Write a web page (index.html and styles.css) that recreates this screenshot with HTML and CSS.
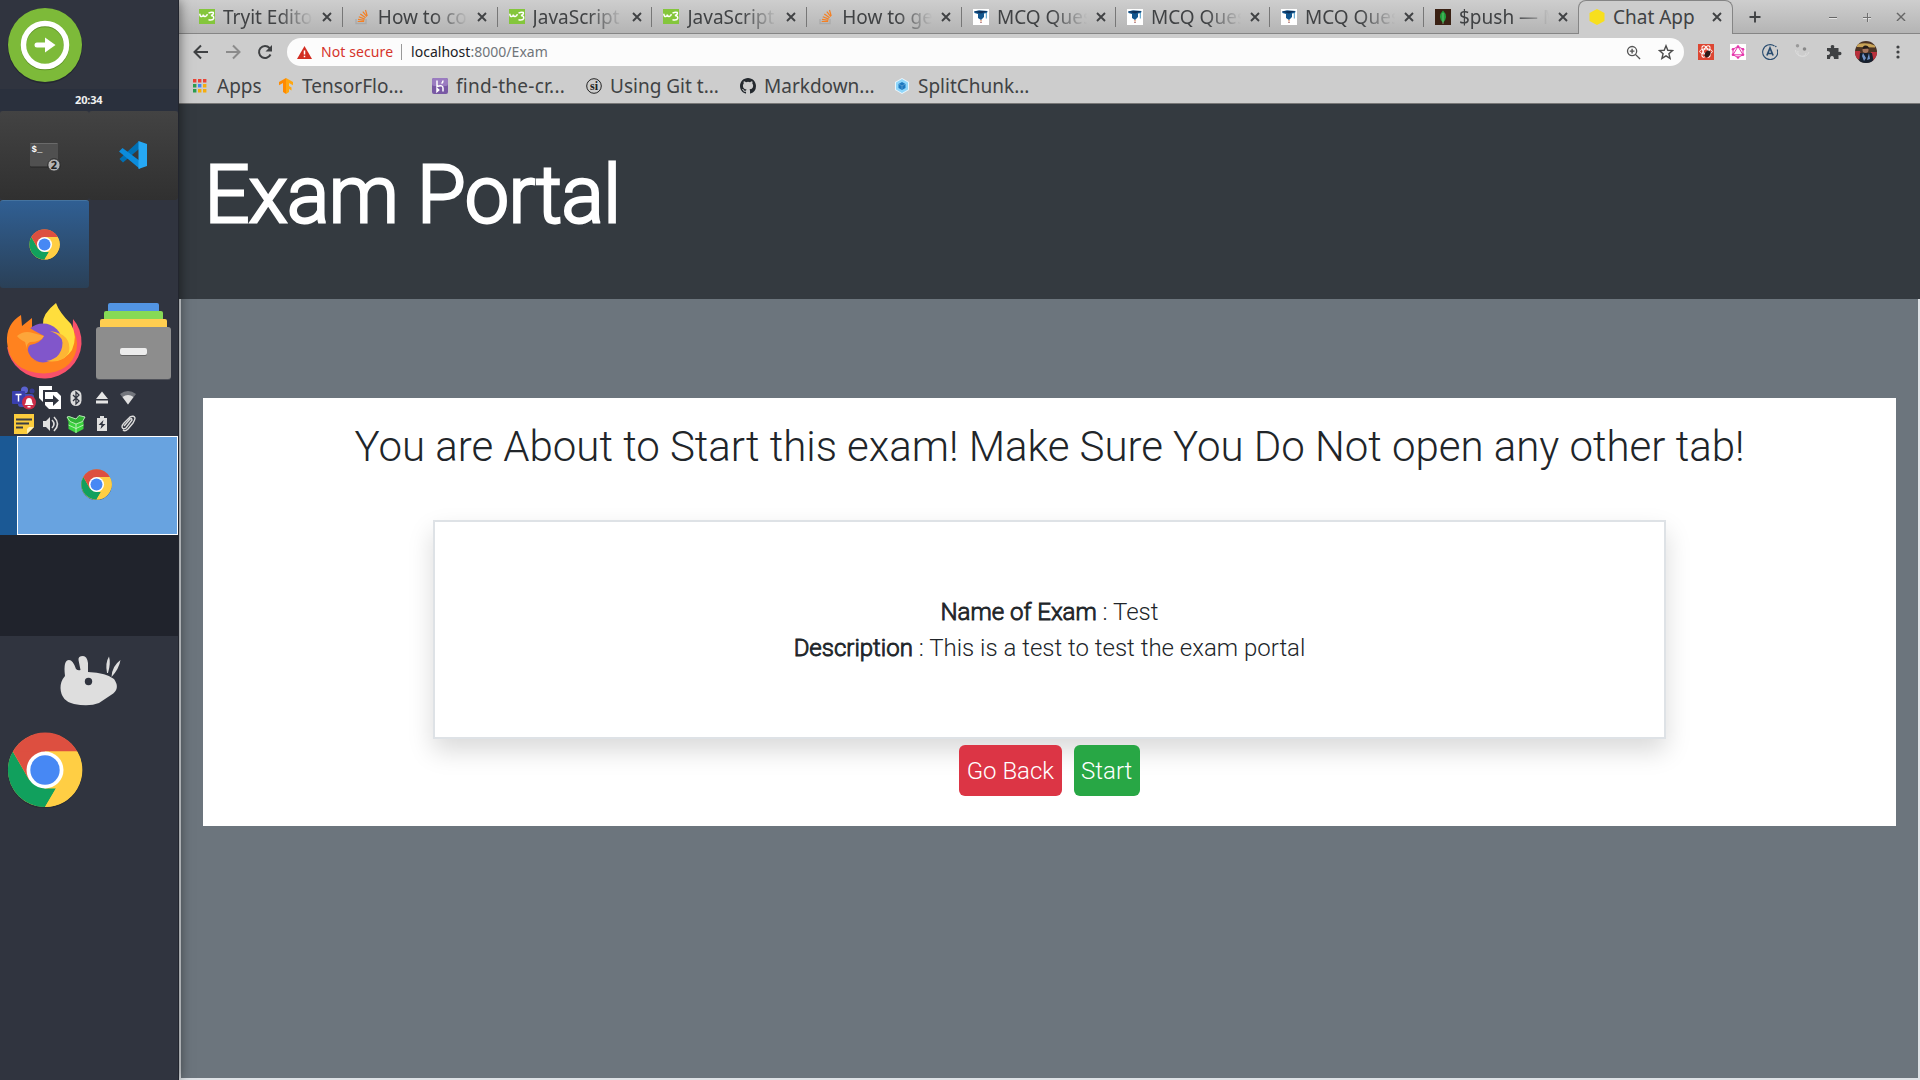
FILE: index.html
```html
<!DOCTYPE html>
<html lang="en">
<head>
<meta charset="utf-8">
<title>Chat App</title>
<link rel="stylesheet" href="styles.css">
</head>
<body>
<svg class="defs" aria-hidden="true">
  <symbol id="chrome" viewBox="0 0 76 76">
    <circle cx="38" cy="39" r="37.5" fill="#22252e" opacity=".5"/>
    <circle cx="38" cy="38" r="37" fill="#ffce44"/>
    <path d="M38 38 5.8 19.6A37 37 0 0 1 70.4 19.5H38z" fill="#dd4f40"/>
    <path d="M38 75A37 37 0 0 1 5.8 19.6L22 47.5 38 56.5H49z" fill="#11a05d"/>
    <path d="M5.8 19.6 22 47.5 38 38V19.5H20z" fill="#dd4f40"/>
    <path d="M38 19.5H70.4A37 37 0 0 1 38 75L54 47.5z" fill="#ffce44"/>
    <circle cx="38" cy="38" r="18.5" fill="#fff"/>
    <circle cx="38" cy="38" r="14.7" fill="#4788f4"/>
  </symbol>
  <symbol id="w3" viewBox="0 0 16 16">
    <rect width="16" height="15" fill="#84c63c"/>
    <path d="M.8 4.8q.2 3 2 2.8 1.500-.2 1.500-2 .3 2.200 2 2 1.700-.2 2-2.400M9.500 4.200q3-1.700 4.800-.7.700 2-2.300 3 3 .2 2.700 2.700-.6 2.400-5.200 1.500" fill="none" stroke="#fff" stroke-width="1.500"/>
  </symbol>
  <symbol id="so" viewBox="0 0 16 16">
    <path d="M2 10v4.500h10V10" fill="none" stroke="#aaa" stroke-width="1.300"/>
    <path d="M3.700 12.500h6.500M4 10.300l6.300 1M4.800 7.700l6 2.400M6.300 5l5.300 3.800M8.800 2.700l4 5M11.500 1l1.700 6" stroke="#f48024" stroke-width="1.200" fill="none"/>
  </symbol>
  <symbol id="mcq" viewBox="0 0 16 16">
    <rect width="16" height="16" fill="#fff"/>
    <path d="M1 2.500 6 1.300l8.500.8-.5 2-3 .5V8L8 11 5 9V5L1.500 4z" fill="#12568e"/>
    <path d="M1 2.500 8 2l6.500.1L8 4.500z" fill="#0c2e57"/>
    <path d="M13.300 3.500v6" stroke="#4c9ac8" stroke-width="1"/>
    <path d="m6.800 11 1.200 3 1.200-3z" fill="#e3b39b"/><circle cx="8" cy="13.500" r=".6" fill="#723"/>
  </symbol>
  <symbol id="close" viewBox="0 0 10 10"><path d="m1 1 8 8M9 1 1 9" stroke="#404244" stroke-width="1.900"/></symbol>
</svg>
<div class="desktop">
  <aside class="panel">
    <div class="launcher">
      <svg width="76" height="78" viewBox="0 0 76 78"><circle cx="38" cy="39" r="37.500" fill="#242831"/><circle cx="38" cy="38" r="37" fill="#7dba39"/><circle cx="38" cy="39" r="21.500" fill="none" stroke="#5d9224" stroke-width="5.500"/><circle cx="38" cy="38" r="21.500" fill="none" stroke="#fff" stroke-width="5.500"/><path d="M30 38h9" stroke="#fff" stroke-width="5" stroke-linecap="round"/><path d="M38 30.500 48.500 38 38 45.500z" fill="#fff"/></svg>
    </div>
    <div class="clock">20:34</div>
    <div class="tasks">
      <div class="task terminal"><svg width="32" height="32" viewBox="0 0 32 32"><rect x="1" y="4" width="28" height="24.500" rx="1" fill="#252525"/><rect x="1" y="4" width="28" height="23.500" rx="1" fill="#505050"/><path d="M1.500 4.500h27" stroke="#6a6a6a"/><text class="prompt" x="2.500" y="13">$_</text><circle cx="25" cy="26" r="6.200" fill="#b4b4b4" stroke="#222"/><text class="count" x="25" y="30">2</text></svg></div>
      <div class="task"><svg width="30" height="30" viewBox="0 0 30 30"><path d="M1.500 19 21 1v8L5 22.500z" fill="#0070b4"/><path d="M1 11.500 4.500 8 22 21v8z" fill="#0c8cdc"/><path d="M20.500 1 29 4v22l-8.500 3z" fill="#26a8f4"/></svg></div>
      <div class="task task-active"><svg width="31" height="31"><use href="#chrome"/></svg></div>
    </div>
    <div class="shortcuts">
      <svg width="76" height="80" viewBox="0 0 76 80"><path d="M67 17Q76 27 75.500 42A37.500 37 0 0 1 1 45l35 20 30-20z" fill="#f9516a"/><path d="M1 40Q0 22 15 13L16 24 26 16V26L65 25Q73 36 70.500 48 65 70 38 71.500 3 70 1 40z" fill="#ff821f"/><path d="M50 1Q53 10 65 22 72 34 66 48 58 60 46 58L37 22Q36 12 50 1z" fill="#ffde3d"/><path d="M45 29Q62 33 59 48 54 60 38 59L30 52z" fill="#fdb534"/><circle cx="37" cy="41" r="19.500" fill="#8156cb"/><path d="M44 29Q59 34 57.500 47 53 57 40 59 57 62 63 50 66 32 44 29z" fill="#fdb534"/><path d="M17 24Q24 25 27 28L38 34Q35 41 24 43 19 47 25 55 28 58 33 60 17 57 16 40L11 34Q11 28 17 24z" fill="#ff821f"/><path d="M11 34Q18 28 27 31L38 34Q35 40 24 40 20 42 21 47L19 40Q13 37 11 34z" fill="#fda63a"/></svg>
      <svg width="76" height="78" viewBox="0 0 76 78"><rect x="13" y="1" width="51" height="20" rx="2" fill="#5294e2"/><rect x="9" y="9" width="59" height="20" rx="2" fill="#87da55"/><rect x="5" y="17" width="67" height="20" rx="2" fill="#ffce51"/><rect x="1" y="26" width="75" height="52" rx="3" fill="#50525a"/><rect x="1" y="25" width="75" height="52" rx="3" fill="#8d8d8d"/><rect x="25" y="47" width="27" height="7" rx="2" fill="#666"/><rect x="25" y="46" width="27" height="7" rx="2" fill="#ececec"/></svg>
    </div>
    <div class="tray">
      <svg viewBox="0 0 26 26"><circle cx="13.500" cy="5" r="3.500" fill="#5a62d0"/><circle cx="21" cy="6" r="2.500" fill="#373b93"/><rect x="7" y="9" width="16" height="13" rx="3" fill="#464eb8"/><rect x="1" y="6" width="13" height="13" rx="1" fill="#393fae"/><path d="M4.500 9.500h6M7.500 9.500v7" stroke="#fff" stroke-width="1.500"/><circle cx="18" cy="17.500" r="7" fill="#cb2d48"/><path d="M13.500 20q1.500-2 1.500-4 .3-3 3-3t3 3q0 2 1.500 4zM16.500 21h3v1.500h-3z" fill="#fff"/></svg>
      <svg viewBox="0 0 26 26"><path d="M2 1h13v4H6v12l-4-4z" fill="#fff"/><path d="M8 7h12l4 4v13H12l-4-4z" fill="#fff"/><path d="M8 15.500h10" stroke="#30343f" stroke-width="3"/><path d="m16 10 6 5.500-6 5.500z" fill="#30343f"/></svg>
      <svg viewBox="0 0 26 26"><rect x="7.500" y="5" width="11" height="16" rx="5.500" fill="#dcdcdc"/><path d="m10 10 6 6-3 3V7l3 3-6 6" fill="none" stroke="#30343f" stroke-width="1.300"/></svg>
      <svg viewBox="0 0 26 26"><path d="m13 6.500 6 7.500H7zM7 15.500h12v3H7z" fill="#e6e6e6"/></svg>
      <svg viewBox="0 0 26 26"><path d="M5 9q8-6 16 0l-8 10.500z" fill="#73767d"/><path d="M7.500 12q5.500-4 11 0L13 19.500z" fill="#e0e0e0"/></svg>
      <svg viewBox="0 0 26 26"><path d="M3 3h20v13l-7 7H3z" fill="#fccd3d"/><path d="m23 16-7 7v-5l2-2z" fill="#fff0b8"/><path d="M5 8.500h16M5 12.500h13M5 16.500h7" stroke="#3a3e45" stroke-width="1.800"/></svg>
      <svg viewBox="0 0 26 26"><path d="M6 10h3l4-4v14l-4-4H6z" fill="#e0e0e0"/><path d="M15 9q4 4 0 8M17 6q7 7 0 14" fill="none" stroke="#dcdcdc" stroke-width="1.600"/></svg>
      <svg viewBox="0 0 26 26"><path d="M5.500 10 13 13l7.500-3v8L13 22l-7.500-4z" fill="#3bd33e"/><path d="m4 6 3-.5 6 2.500v5l-8-2.500zM13 8l3-3.500 6 1.500-2.500 4.500L13 13z" fill="#30b535"/><path d="M13 13v9M5.500 14l7.500 3.500 7.500-3.500M4 6l3 4.500 6 2.500 6.500-2.500L22 6l-6-1.500L13 8 6 5.500z" stroke="#c4f4c1" stroke-width=".9" fill="none"/></svg>
      <svg viewBox="0 0 26 26"><path d="M8 7h3V5h4v2h3v13H8z" fill="#e0e0e0"/><path d="m14.500 9-5 5h3l-1 4 5-5h-3z" fill="#30343f"/></svg>
      <svg viewBox="0 0 26 26"><path d="m9 15 6-7q2-1 2 1l-6 8q-3 2-4-1 0-2 2-4l6-6q4-2 5 1 0 2-2 5l-5 6q-3 3-5 1" fill="none" stroke="#dcdcdc" stroke-width="1.400"/></svg>
    </div>
    <div class="pager">
      <div class="workspace"><div class="mini-window"><svg width="31" height="31"><use href="#chrome"/></svg></div></div>
    </div>
    <div class="mouse"><svg width="62" height="54" viewBox="0 0 62 54"><path d="M5 21Q3 5 9 5 13 5 16 14 18 16 20.500 15L18.500 5Q18 1 23 1 27 1 28 8V17Q47 18 54 24 61 34 51 40L39 48Q29 52 14 49 1 46 .5 33 .5 26 5 21z" fill="#dedede"/><circle cx="28.500" cy="26.500" r="3.700" fill="#30343f"/><path d="M47 18Q45 8 49 1.500 51 8 48 18zM51.500 22Q52 11 60.500 5 59 14 51.500 22z" fill="#dedede"/></svg></div>
    <div class="pinned"><svg width="76" height="78" viewBox="0 0 76 76" preserveAspectRatio="xMidYMin"><use href="#chrome" width="76" height="76"/></svg></div>
  </aside>

  <main class="browser">
    <div class="tabs">
      <div class="tab wide"><svg class="fav"><use href="#w3"/></svg><span class="title fade">Tryit Edito</span><svg class="x"><use href="#close"/></svg></div>
      <div class="tab wide"><svg class="fav"><use href="#so"/></svg><span class="title fade">How to con</span><svg class="x"><use href="#close"/></svg></div>
      <div class="tab wide"><svg class="fav"><use href="#w3"/></svg><span class="title fade">JavaScript</span><svg class="x"><use href="#close"/></svg></div>
      <div class="tab wide"><svg class="fav"><use href="#w3"/></svg><span class="title fade">JavaScript</span><svg class="x"><use href="#close"/></svg></div>
      <div class="tab wide"><svg class="fav"><use href="#so"/></svg><span class="title fade">How to ge</span><svg class="x"><use href="#close"/></svg></div>
      <div class="tab"><svg class="fav"><use href="#mcq"/></svg><span class="title fade">MCQ Ques</span><svg class="x"><use href="#close"/></svg></div>
      <div class="tab"><svg class="fav"><use href="#mcq"/></svg><span class="title fade">MCQ Ques</span><svg class="x"><use href="#close"/></svg></div>
      <div class="tab"><svg class="fav"><use href="#mcq"/></svg><span class="title fade">MCQ Ques</span><svg class="x"><use href="#close"/></svg></div>
      <div class="tab tab-last"><svg class="fav" viewBox="0 0 16 16"><rect width="16" height="16" fill="#3a2114"/><path d="M8 1.500Q14 7.500 8 14 2 7.500 8 1.500z" fill="#1fa13c"/><path d="M8 4v11" stroke="#8bc38d" stroke-width=".7"/></svg><span class="title fade">$push — M</span><svg class="x"><use href="#close"/></svg></div>
      <div class="tab tab-active"><svg class="fav" viewBox="0 0 16 16"><path d="m8 0 7.500 4v8L8 16 .5 12V4z" fill="#f7df1e"/></svg><span class="title">Chat App</span><svg class="x"><use href="#close"/></svg></div>
      <svg class="new-tab" viewBox="0 0 12 12"><path d="M6 .5v11M.5 6h11" stroke="#404244" stroke-width="1.900"/></svg>
      <div class="controls">
        <svg viewBox="0 0 10 10"><path d="M1 6.500h8" stroke="#e5e5e5"/><path d="M1 5.500h8" stroke="#666"/></svg>
        <svg viewBox="0 0 10 10"><path d="M1 6.500h8M6 2v8" stroke="#e5e5e5"/><path d="M1 5.500h8M5.500 1v9" stroke="#707070"/></svg>
        <svg viewBox="0 0 10 10"><path d="m1 2 8 8M9 2l-8 8" stroke="#e5e5e5"/><path d="m1 1 8 8M9 1 1 9" stroke="#666" stroke-width="1.600"/></svg>
      </div>
    </div>

    <div class="toolbar">
      <div class="nav">
        <svg viewBox="0 0 16 16"><path d="M15 8H2M8 1.500 1.500 8 8 14.500" fill="none" stroke="#3f4143" stroke-width="2"/></svg>
        <svg viewBox="0 0 16 16"><path d="M1 8h13M8 1.500 14.500 8 8 14.500" fill="none" stroke="#8b8b8b" stroke-width="2"/></svg>
        <svg viewBox="0 0 16 16"><path d="M13.500 10.500A6 6 0 1 1 12.500 4L14 6" fill="none" stroke="#3f4143" stroke-width="2"/><path d="M15 1v6.500H8.500z" fill="#3f4143"/></svg>
      </div>
      <div class="address">
        <svg class="warn" viewBox="0 0 15 13"><path d="M7.500 0 15 13H0z" fill="#d32d22"/><path d="M7.500 4.500V8.500M7.500 9.700v1.600" stroke="#fff" stroke-width="1.500"/></svg>
        <span class="insecure">Not secure</span>
        <span class="url"><b>localhost</b>:8000/Exam</span>
        <svg class="magnify" viewBox="0 0 16 16"><circle cx="6.500" cy="6.500" r="4.900" fill="none" stroke="#555" stroke-width="1.400"/><path d="m10 10 5 5M4 6.500h5M6.500 4v5" stroke="#555" stroke-width="1.500"/></svg>
        <svg class="star" viewBox="0 0 16 16"><path d="m8 1.800 1.800 4.500 4.800.3-3.700 3.100 1.200 4.700L8 11.800l-4.100 2.600 1.200-4.700-3.700-3.100 4.800-.3z" fill="none" stroke="#4d4d4d" stroke-width="1.400"/></svg>
      </div>
      <div class="extensions">
        <svg viewBox="0 0 16 16"><rect width="16" height="16" fill="#dd4632"/><g fill="none" stroke="#fff" stroke-width="1"><ellipse cx="8" cy="7.500" rx="6.300" ry="2.600"/><ellipse cx="8" cy="7.500" rx="6.300" ry="2.600" transform="rotate(60 8 7.500)"/><ellipse cx="8" cy="7.500" rx="6.300" ry="2.600" transform="rotate(120 8 7.500)"/></g><ellipse cx="9.500" cy="10" rx="2.500" ry="3.600" transform="rotate(35 9.500 10)" fill="#2b1a18"/></svg>
        <svg viewBox="0 0 16 16"><rect width="16" height="16" fill="#fff"/><path d="m8 2.500 5 2.700v5.600L8 13.500l-5-2.700V5.200zM8 2.500l5 8.300H3z" fill="none" stroke="#e535ab"/><g fill="#e535ab"><circle cx="8" cy="2.500" r="1.300"/><circle cx="13" cy="5.200" r="1.300"/><circle cx="13" cy="10.800" r="1.300"/><circle cx="8" cy="13.500" r="1.300"/><circle cx="3" cy="10.800" r="1.300"/><circle cx="3" cy="5.200" r="1.300"/></g></svg>
        <svg viewBox="0 0 16 16"><path d="M15.200 5.500A7.500 7.500 0 1 1 12.500 2" fill="none" stroke="#294c70" stroke-width="1.100"/><circle cx="13.800" cy="2.500" r=".8" fill="#294c70"/><path d="m4.900 11.500 3.100-7.500 3.100 7.500M6 9.500h4.300" fill="none" stroke="#294c70" stroke-width="1.700"/></svg>
        <svg viewBox="0 0 16 16"><circle cx="3.500" cy="1.800" r="1.700" fill="#999"/><circle cx="10.500" cy="5" r="1.800" fill="#888"/><path d="M1.500 6A7 7 0 0 0 15 8M4 7a4 4 0 0 0 8 2" fill="none" stroke="#dcdcdc"/></svg>
        <svg viewBox="0 0 16 16"><path d="M1 4h4q-1-3 1.500-3T8 4h4.500v4q3-1 3 1.500t-3 1.500v4H8q0-3-2-3t-2 3H1v-4q3 0 3-2T1 7z" fill="#3f4143"/></svg>
        <svg class="avatar" viewBox="0 0 22 22"><clipPath id="face"><circle cx="11" cy="11" r="11"/></clipPath><g clip-path="url(#face)"><rect width="22" height="22" fill="#4b3324"/><path d="M0 10h5l2 8H0zM16 11h6v9h-6z" fill="#b9303c"/><path d="M2 3.500q9-3 18 1v2L2 6z" fill="#c8a357"/><path d="M5 12h12l2 10H4z" fill="#16202f"/><path d="m8 12 3 5-2 3-2-5zM14 12l1 6-3 1z" fill="#7193c6"/><circle cx="10.500" cy="9" r="3" fill="#a8775e"/><path d="M7.500 8q0-3.500 3-3.500t3.500 3z" fill="#221a18"/></g></svg>
        <svg class="menu" viewBox="0 0 4 14"><g fill="#404244"><circle cx="2" cy="2" r="1.600"/><circle cx="2" cy="7" r="1.600"/><circle cx="2" cy="12" r="1.600"/></g></svg>
      </div>
    </div>

    <div class="bookmarks">
      <a class="mark apps"><svg viewBox="0 0 14 14"><path d="M0 0h3.400v3.400H0zM5 0h3.400v3.400H5zM10 0h3.400v3.400H10z" fill="#ea4335"/><path d="M0 5h3.400v3.400H0zM0 10h3.400v3.400H0z" fill="#2b9e50"/><path d="M5 5h3.400v3.400H5z" fill="#4285f4"/><path d="M10 5h3.400v3.400H10zM5 10h3.400v3.400H5zM10 10h3.400v3.400H10z" fill="#f5ad0e"/></svg>Apps</a>
      <a class="mark"><svg viewBox="0 0 16 16"><path d="M8 0v16l-3-2V5L1 7.200V4z" fill="#ff8a00"/><path d="m8 0 7 4v3.200L11 5v3l2.500 1.500v3L11 11v3l-3 2z" fill="#ffa70f"/></svg>TensorFlo...</a>
      <a class="mark heroku"><svg viewBox="0 0 16 16"><rect width="16" height="16" rx="2" fill="#7959a4"/><rect width="16" height="8" rx="2" fill="#9a7cc0"/><path d="M5 2.500v6q6-2 6 1.500v3.500M5 10.500v3l1.700-1.500zM11 2.500q0 2-1.500 3" fill="none" stroke="#fff" stroke-width="1.500"/></svg>find-the-cr...</a>
      <a class="mark"><svg viewBox="0 0 16 16"><circle cx="8" cy="8" r="7.300" fill="none" stroke="#222"/><text class="si" x="8" y="12">si</text></svg>Using Git t...</a>
      <a class="mark"><svg viewBox="0 0 16 16"><path fill="#24292e" d="M8 0C3.580 0 0 3.580 0 8c0 3.540 2.290 6.530 5.470 7.590.4.070.55-.17.55-.38v-1.490c-2.010.37-2.530-.49-2.690-.94-.09-.23-.48-.94-.82-1.130-.28-.15-.68-.52-.01-.53.63-.01 1.080.58 1.230.82.72 1.210 1.870.87 2.330.66.07-.52.28-.87.51-1.070-1.780-.2-3.640-.89-3.640-3.950 0-.87.31-1.590.82-2.150-.08-.2-.36-1.020.08-2.120 0 0 .67-.21 2.200.82a7.500 7.500 0 0 1 4 0c1.530-1.040 2.200-.82 2.200-.82.44 1.100.16 1.920.08 2.120.51.56.82 1.270.82 2.150 0 3.070-1.870 3.750-3.650 3.950.29.25.54.73.54 1.480v2.200c0 .21.15.46.55.38A8 8 0 0 0 16 8c0-4.420-3.580-8-8-8z"/></svg>Markdown...</a>
      <a class="mark"><svg viewBox="0 0 16 16"><path d="m8 0 7 4v8l-7 4-7-4V4z" fill="#eaf6fc"/><path d="m8 1 6 3.500v7L8 15l-6-3.500v-7z" fill="#8ed6fb"/><path d="m8 4 3.500 2v4L8 12l-3.500-2V6z" fill="#1c78c0"/><path d="m5 6.300 3 1.500 3-1.500M8 8v3.500" fill="none" stroke="#75afd8" stroke-width=".6"/></svg>SplitChunk...</a>
    </div>

    <header class="portal-header"><h1>Exam Portal</h1></header>
    <section class="page">
      <div class="card">
        <h3>You are About to Start this exam! Make Sure You Do Not open any other tab!</h3>
        <div class="details">
          <p><strong>Name of Exam</strong> : Test</p>
          <p><strong>Description</strong> : This is a test to test the exam portal</p>
        </div>
        <div class="actions"><button class="btn danger">Go Back</button><button class="btn success">Start</button></div>
      </div>
    </section>
  </main>
</div>
</body>
</html>
```
FILE: styles.css
```css
* { box-sizing: border-box; }
body { margin: 0; background: #30343f; overflow: hidden; }
svg { display: block; flex: none; }
.defs { display: none; }
.desktop { display: flex; width: 1920px; height: 1080px; }

.panel {
  flex: none; width: 179px; height: 1080px;
  display: flex; flex-direction: column;
  background: #30343f; border-right: 1px solid #22252e;
  position: relative; z-index: 1;
  box-shadow: 0 0 12px rgba(0, 0, 0, .55);
}
.launcher { height: 89px; padding: 6.500px 0 0 6.500px; }
.clock {
  height: 22px; padding-left: 75px; background: #2a303d;
  color: #f0f0f0; font: bold 11px/22px "Noto Sans", sans-serif; letter-spacing: -.15px;
}
.tasks { display: grid; grid-template-columns: 89px 89px; grid-template-rows: 89px 88px; }
.task {
  display: flex; align-items: center; justify-content: center; padding: 0 1px 2px 0;
  background: linear-gradient(#434343, #303030); border-radius: 3px;
}
.terminal { padding: 0 0 1px 1px; }
.task-active { background: linear-gradient(#305f93, #2a4057); border-top: 1px solid #45739f; padding-bottom: 1px; }
.prompt { font: bold 9px "Liberation Mono", monospace; fill: #fff; }
.count { font: bold 11px "Noto Sans", sans-serif; fill: #222; text-anchor: middle; }
.shortcuts { height: 96px; display: flex; gap: 13px; padding: 14px 0 0 6px; }
.tray { height: 52px; display: grid; grid-template-columns: repeat(5, 26px); grid-template-rows: 26px 26px; padding: 1px 0 0 11px; }
.tray svg { width: 26px; height: 26px; }
.pager { height: 200px; background: #20232c; }
.workspace { height: 99px; padding-left: 17px; background: #1b5995; }
.mini-window {
  height: 99px; border: 1px solid #fff; background: #68a3e0; padding: 0 2px 2px 0;
  display: flex; align-items: center; justify-content: center;
}
.mouse { height: 96px; padding: 19px 0 0 60px; }
.pinned { padding-left: 6.500px; }

.browser { flex: 1; min-width: 0; display: flex; flex-direction: column; background: #cdcdcd; }
.tabs {
  flex: none; height: 34px; display: flex; align-items: center; padding-left: 9px;
  background: linear-gradient(#cecece, #b4b4b4); border-bottom: 1px solid #858585;
  font: 19px/34px "Noto Sans", sans-serif; color: #404244;
}
.tab { flex: none; width: 154px; height: 34px; padding-left: 11px; display: flex; align-items: center; }
.wide { width: 154.800px; }
.tab:not(.tab-last):not(.tab-active) { background: linear-gradient(#777, #777) right 7px / 1px 20px no-repeat; }
.fav { width: 16px; height: 16px; }
.title { margin-left: 8px; width: 92px; overflow: hidden; white-space: nowrap; }
.fade { -webkit-mask-image: linear-gradient(90deg, #000 60%, transparent 98%); mask-image: linear-gradient(90deg, #000 60%, transparent 98%); }
.x { width: 10px; height: 10px; margin-left: 7px; }
.tab-active { width: 155px; background: #cdcdcd; border: 1px solid #858585; border-bottom: 0; border-radius: 8px 8px 0 0; padding: 0 0 1px 10px; }
.new-tab { width: 12px; height: 12px; margin-left: 16px; }
.controls { margin-left: auto; display: flex; gap: 24px; padding-right: 14px; }
.controls svg { width: 10px; height: 10px; }

.toolbar { flex: none; height: 36px; display: flex; align-items: center; }
.nav { display: flex; gap: 16px; padding-left: 14px; width: 108px; }
.nav svg { width: 16px; height: 16px; }
.address {
  width: 1397px; height: 28px; border-radius: 14px; background: #fcfcfc;
  display: flex; align-items: center; padding: 0 10px; font: 14px/28px "Noto Sans", sans-serif;
}
.warn { width: 15px; height: 13px; }
.insecure { width: 81px; margin-left: 9px; color: #d5342b; letter-spacing: .1px; background: linear-gradient(#999, #999) right 6px / 1px 16px no-repeat; }
.url { margin-left: 9px; color: #70757a; letter-spacing: .03px; }
.url b { font-weight: 400; color: #202124; }
.magnify { width: 15px; height: 15px; margin-left: auto; }
.star { width: 16px; height: 16px; margin: 0 0 0 17px; }
.extensions { display: flex; align-items: center; gap: 16px; margin-left: 14px; }
.extensions svg { width: 16px; height: 16px; }
.extensions .avatar { width: 22px; height: 22px; margin-left: -3px; }
.extensions .menu { width: 4px; height: 14px; margin-left: 3px; }

.bookmarks {
  flex: none; height: 34px; display: flex; padding-left: 14px; border-bottom: 1px solid #777;
  font: 19px/30px "Noto Sans", sans-serif; color: #404244; white-space: nowrap;
}
.mark { display: flex; gap: 8px; width: 154px; height: 31px; align-items: center; }
.mark svg { width: 16px; height: 16px; }
.apps { width: 85px; gap: 10px; }
.apps svg { width: 14px; height: 14px; }
.heroku { letter-spacing: .25px; }
.si { font: bold 12px "Liberation Serif", serif; letter-spacing: 0; text-anchor: middle; fill: #222; }

.portal-header { flex: none; height: 195px; padding: 41px 25.500px 0; background: #343a40; }
h1, h3, p { margin: 0; }
h1 { font: 300 79px/101px Roboto, sans-serif; color: #fff; -webkit-text-stroke: 2.800px #fff; letter-spacing: -.5px; }
.page { flex: 1; background: #6c757d; border: 2px solid #dee2e6; border-top: 0; padding: 99px 22px 0; }
.card { height: 428px; background: #fff; color: #212529; font: 300 24px/36px Roboto, sans-serif; text-align: center; padding-top: 24px; }
h3 { font: 300 42px/50px Roboto, sans-serif; white-space: nowrap; letter-spacing: -.02px; }
.details {
  width: 1233px; height: 219px; margin: 48px auto 0; padding: 72px 0 0;
  border: 2px solid #dee2e6; box-shadow: 0 12px 24px rgba(0, 0, 0, .15);
}
strong { font-weight: 300; -webkit-text-stroke: .9px #212529; }
.actions { position: relative; display: flex; justify-content: center; gap: 12px; padding-top: 6px; }
.btn { height: 51px; padding: 1px 7.500px 0; border: 0; border-radius: 6px; color: #fff; font: 300 24px/50px Roboto, sans-serif; }
.danger { background: #dc3545; }
.success { background: #28a745; }
```
